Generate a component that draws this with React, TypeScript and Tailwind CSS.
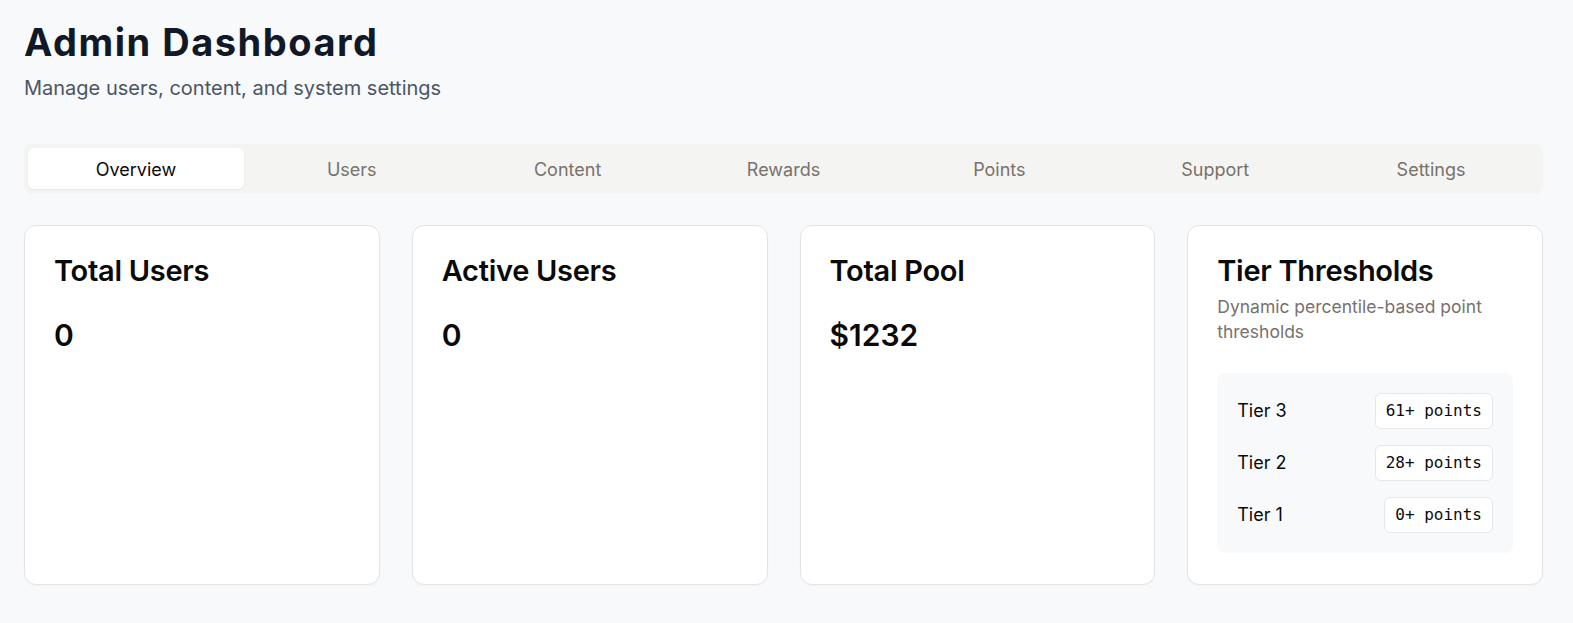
import React from 'react';

const tabs = ['Overview', 'Users', 'Content', 'Rewards', 'Points', 'Support', 'Settings'];

const stats = [
  { title: 'Total Users', value: '0' },
  { title: 'Active Users', value: '0' },
  { title: 'Total Pool', value: '$1232' },
];

const tiers = [
  { name: 'Tier 3', points: '61+ points' },
  { name: 'Tier 2', points: '28+ points' },
  { name: 'Tier 1', points: '0+ points' },
];

function StatCard({ title, value }: { title: string; value: string }) {
  return (
    <div className="h-[360px] rounded-xl border border-[#e4e4e7] bg-white px-[29px] pt-[27px] shadow-[0_1px_2px_rgba(0,0,0,0.03)]">
      <h3 className="text-[29px] font-semibold leading-9 tracking-[-0.01em] text-[#0a0a0a]">{title}</h3>
      <p className="mt-7 text-[30px] font-semibold leading-9 text-[#0a0a0a]">{value}</p>
    </div>
  );
}

export default function App() {
  return (
    <div className="min-h-screen bg-[#f8f9fb] pl-6 pr-[30px] pt-[18px] font-['Inter',sans-serif]">
      <header>
        <h1 className="text-[38px] font-bold leading-[48px] tracking-[0.04em] text-[#111827]">Admin Dashboard</h1>
        <p className="mt-2 text-xl leading-7 text-[#4b5563]">Manage users, content, and system settings</p>
      </header>

      <nav className="mt-[42px] grid h-[50px] grid-cols-7 rounded-lg bg-[#f4f4f2] p-1">
        {tabs.map((tab, i) => (
          <button
            key={tab}
            className={
              i === 0
                ? 'h-[41px] rounded-md bg-white pt-[3px] text-lg text-[#0a0a0a] shadow-[0_1px_2px_rgba(0,0,0,0.06)]'
                : 'h-[41px] rounded-md pt-[3px] text-lg text-[#78716c]'
            }
          >
            {tab}
          </button>
        ))}
      </nav>

      <div className="mt-[31px] grid grid-cols-4 gap-8">
        {stats.map((s) => (
          <StatCard key={s.title} title={s.title} value={s.value} />
        ))}

        <div className="h-[360px] rounded-xl border border-[#e4e4e7] bg-white px-[29px] pt-[27px] shadow-[0_1px_2px_rgba(0,0,0,0.03)]">
          <h3 className="text-[29px] font-semibold leading-9 tracking-[-0.01em] text-[#0a0a0a]">Tier Thresholds</h3>
          <p className="mt-[5px] text-[17.5px] leading-[25px] text-[#78716c]">Dynamic percentile-based point thresholds</p>
          <div className="mt-[29px] space-y-4 rounded-lg bg-[#f8f9fb] p-5">
            {tiers.map((t) => (
              <div key={t.name} className="flex h-9 items-center justify-between">
                <span className="text-lg text-[#0a0a0a]">{t.name}</span>
                <span className="flex h-9 items-center rounded-md border border-[#e5e7eb] bg-white px-[10px] font-['DejaVu_Sans_Mono',monospace] text-base text-[#0a0a0a]">
                  {t.points}
                </span>
              </div>
            ))}
          </div>
        </div>
      </div>
    </div>
  );
}
